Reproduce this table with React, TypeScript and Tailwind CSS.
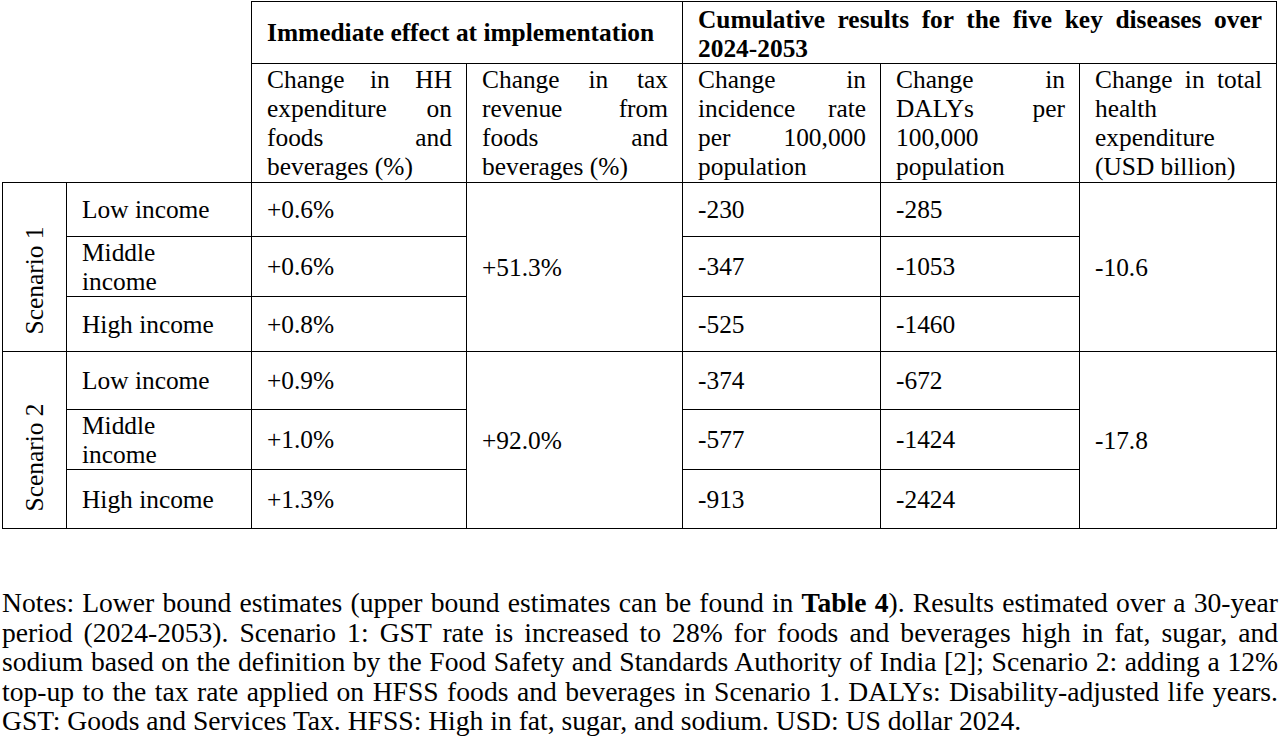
import React from "react";

type Row = {
  income: React.ReactNode;
  hh: string;
  incidence: string;
  dalys: string;
};

type Scenario = {
  label: string;
  tax: string;
  health: string;
  rows: Row[];
  heights: string[];
};

const scenarios: Scenario[] = [
  {
    label: "Scenario 1",
    tax: "+51.3%",
    health: "-10.6",
    heights: ["h-[54px]", "h-[60px]", "h-[55px]"],
    rows: [
      { income: "Low income", hh: "+0.6%", incidence: "-230", dalys: "-285" },
      {
        income: (
          <>
            Middle
            <br />
            income
          </>
        ),
        hh: "+0.6%",
        incidence: "-347",
        dalys: "-1053",
      },
      { income: "High income", hh: "+0.8%", incidence: "-525", dalys: "-1460" },
    ],
  },
  {
    label: "Scenario 2",
    tax: "+92.0%",
    health: "-17.8",
    heights: ["h-[58px]", "h-[60px]", "h-[59px]"],
    rows: [
      { income: "Low income", hh: "+0.9%", incidence: "-374", dalys: "-672" },
      {
        income: (
          <>
            Middle
            <br />
            income
          </>
        ),
        hh: "+1.0%",
        incidence: "-577",
        dalys: "-1424",
      },
      { income: "High income", hh: "+1.3%", incidence: "-913", dalys: "-2424" },
    ],
  },
];

const subHeaders = [
  "Change in HH expenditure on foods and beverages (%)",
  "Change in tax revenue from foods and beverages (%)",
  "Change in incidence rate per 100,000 population",
  "Change in DALYs per 100,000 population",
  "Change in total health expenditure (USD billion)",
];

const cell = "border-[1.5px] border-black pl-[15px] pr-[14px] align-middle text-left font-normal";

function NoteLine({ children, last }: { children: React.ReactNode; last?: boolean }) {
  return (
    <div className={last ? "text-left" : "text-justify [text-align-last:justify]"}>{children}</div>
  );
}

export default function App() {
  return (
    <div className="bg-white pt-px px-[2px] text-black font-['Liberation_Serif',serif]">
      <table className="table-fixed border-collapse w-[1274px] text-[25.4px] leading-[29px]">
        <colgroup>
          <col className="w-[64px]" />
          <col className="w-[185px]" />
          <col className="w-[215px]" />
          <col className="w-[216px]" />
          <col className="w-[198px]" />
          <col className="w-[199px]" />
          <col className="w-[197px]" />
        </colgroup>
        <thead>
          <tr className="h-[61px]">
            <th colSpan={2} rowSpan={2} className="border-0 p-0" />
            <th
              colSpan={2}
              className="border-[1.5px] border-black pl-[15px] pr-[14px] align-middle text-left font-bold"
            >
              Immediate effect at implementation
            </th>
            <th
              colSpan={3}
              className="border-[1.5px] border-black pl-[15px] pr-[14px] pt-[3px] pb-0 align-top text-justify font-bold"
            >
              Cumulative results for the five key diseases over 2024-2053
            </th>
          </tr>
          <tr className="h-[119px]">
            {subHeaders.map((h) => (
              <th
                key={h}
                className="border-[1.5px] border-black pl-[15px] pr-[14px] pt-[1px] pb-0 align-top text-justify font-normal"
              >
                {h}
              </th>
            ))}
          </tr>
        </thead>
        <tbody>
          {scenarios.map((s) =>
            s.rows.map((r, i) => (
              <tr key={`${s.label}-${i}`} className={s.heights[i]}>
                {i === 0 && (
                  <td rowSpan={3} className="border-[1.5px] border-black p-0 pb-[17px] align-bottom">
                    <div className="flex h-[107px] items-center justify-center">
                      <span className="block whitespace-nowrap -rotate-90">{s.label}</span>
                    </div>
                  </td>
                )}
                <td className={cell}>{r.income}</td>
                <td className={cell}>{r.hh}</td>
                {i === 0 && (
                  <td rowSpan={3} className={cell}>
                    {s.tax}
                  </td>
                )}
                <td className={cell}>{r.incidence}</td>
                <td className={cell}>{r.dalys}</td>
                {i === 0 && (
                  <td rowSpan={3} className={cell}>
                    {s.health}
                  </td>
                )}
              </tr>
            ))
          )}
        </tbody>
      </table>

      <div className="mt-[59px] w-[1276px] text-[27.6px] leading-[29.5px]">
        <NoteLine>
          Notes: Lower bound estimates (upper bound estimates can be found in <b>Table 4</b>). Results
          estimated over a 30-year
        </NoteLine>
        <NoteLine>
          period (2024-2053). Scenario 1: GST rate is increased to 28% for foods and beverages high in fat,
          sugar, and
        </NoteLine>
        <NoteLine>
          sodium based on the definition by the Food Safety and Standards Authority of India [2]; Scenario 2:
          adding a 12%
        </NoteLine>
        <NoteLine>
          top-up to the tax rate applied on HFSS foods and beverages in Scenario 1. DALYs: Disability-adjusted
          life years.
        </NoteLine>
        <NoteLine last>
          GST: Goods and Services Tax. HFSS: High in fat, sugar, and sodium. USD: US dollar 2024.
        </NoteLine>
      </div>
    </div>
  );
}
